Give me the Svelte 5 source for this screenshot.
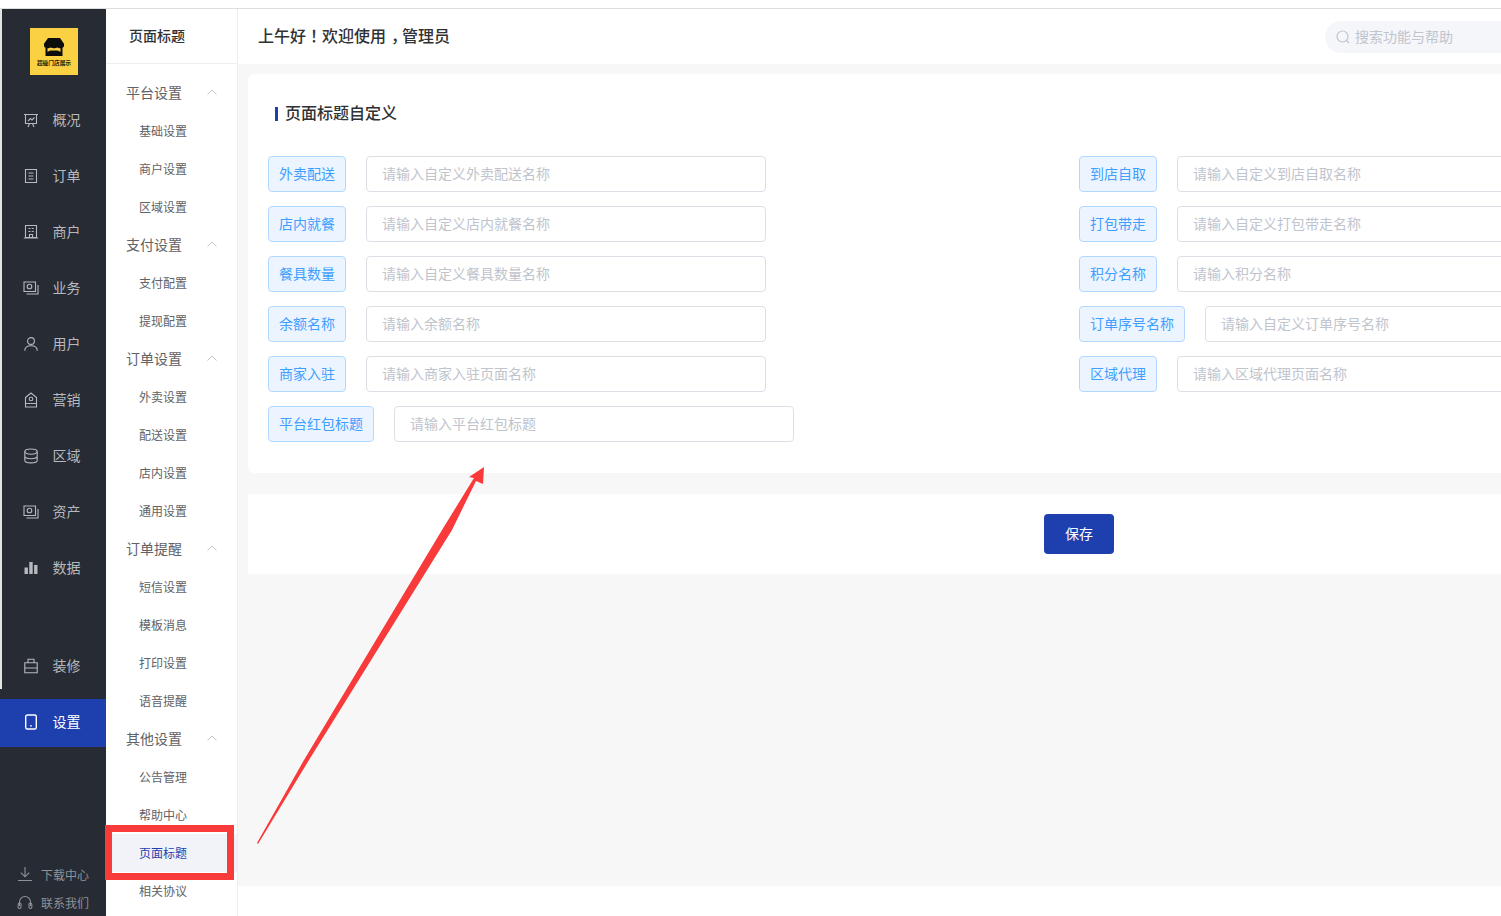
<script>
  const railTop = ['概况','订单','商户','业务','用户','营销','区域','资产','数据'];
  const groups = [
    ['平台设置', ['基础设置','商户设置','区域设置']],
    ['支付设置', ['支付配置','提现配置']],
    ['订单设置', ['外卖设置','配送设置','店内设置','通用设置']],
    ['订单提醒', ['短信设置','模板消息','打印设置','语音提醒']],
    ['其他设置', ['公告管理','帮助中心','页面标题','相关协议']]
  ];
  const left = [
    ['外卖配送','请输入自定义外卖配送名称'],
    ['店内就餐','请输入自定义店内就餐名称'],
    ['餐具数量','请输入自定义餐具数量名称'],
    ['余额名称','请输入余额名称'],
    ['商家入驻','请输入商家入驻页面名称'],
    ['平台红包标题','请输入平台红包标题']
  ];
  const right = [
    ['到店自取','请输入自定义到店自取名称'],
    ['打包带走','请输入自定义打包带走名称'],
    ['积分名称','请输入积分名称'],
    ['订单序号名称','请输入自定义订单序号名称'],
    ['区域代理','请输入区域代理页面名称']
  ];
</script>

{#snippet icon(name)}
  <svg class="ico" viewBox="0 0 16 16" fill="none" stroke="currentColor" stroke-width="1.1">
    {#if name === '概况'}
      <path d="M1 2.5h14M2.5 2.500v9h11v-9M5 15l1.500-3.500M11 15l-1.500-3.500M5 9l2.500-2.500 1.500 1.500 2.500-2.500"/>
    {:else if name === '订单'}
      <path d="M2.500 1.500h11v13h-11zM5.500 5h5M5.500 8h5M5.500 11h5"/>
    {:else if name === '商户'}
      <path d="M2.500 1.500h11v12h-11zM.8 14h14.400M5.500 4.500h2M8.700 4.500h2M5.500 7.500h2M8.700 7.500h2M6.500 14v-3.500h3V14"/>
    {:else if name === '业务' || name === '资产'}
      <path d="M1 2h11.500v9.500H1zM3.500 14h11.500V5"/><circle cx="6.500" cy="6.500" r="2.300"/>
    {:else if name === '用户'}
      <circle cx="8" cy="5" r="3.400"/><path d="M1.800 14.800c0-3.400 2.600-5 6.200-5s6.200 1.600 6.200 5"/>
    {:else if name === '营销'}
      <path d="M2.500 5.500 8 1l5.500 4.500V15h-11zM2.500 11.500h11"/><circle cx="8" cy="7" r="1.800"/>
    {:else if name === '区域'}
      <ellipse cx="8" cy="3.600" rx="6.200" ry="2.600"/><path d="M1.800 3.600v8.600c0 1.500 2.800 2.700 6.200 2.700s6.200-1.200 6.200-2.700V3.600M1.800 8c0 1.500 2.800 2.700 6.200 2.700s6.200-1.200 6.200-2.700"/>
    {:else if name === '数据'}
      <path fill="currentColor" stroke="none" d="M1.500 7.500h3.400V14H1.500zM6.300 2h3.400v12H6.300zM11.100 5h3.400v9h-3.400z"/>
    {:else if name === '装修'}
      <path d="M1.800 4.800h12.400V14.800H1.800zM5 4.800V1.200h6v3.600M1.800 10h12.400"/>
    {:else if name === '设置'}
      <rect x="2.700" y="1" width="10.600" height="14" rx="1.600" stroke-width="1.400"/><circle cx="8" cy="11.800" r=".9" fill="currentColor" stroke="none"/>
    {:else if name === 'download'}
      <path d="M8 1v9.500M3.800 6.600 8 10.800l4.200-4.200M1 14.500h14"/>
    {:else if name === 'contact'}
      <path d="M2.500 12V8a5.500 5.500 0 0 1 11 0v4"/><rect x="1.200" y="9" width="2.800" height="5.500" rx="1.200"/><rect x="12" y="9" width="2.800" height="5.500" rx="1.200"/>
    {/if}
  </svg>
{/snippet}

{#snippet field(row)}
  <div class="field">
    <span class="tag">{row[0]}</span>
    <input class="inp" placeholder={row[1]} />
  </div>
{/snippet}

<div class="page">
  <div class="shell">
    <aside class="rail">
      <div class="logo">
        <svg class="logo-mark" viewBox="0 0 20 20" preserveAspectRatio="none">
          <path fill="#0d0d0d" d="M4 0h12l4 6.500v2.500a2 2 0 0 1-1.500 1.900V20H1.500V10.900A2 2 0 0 1 0 9V6.500z"/>
          <path fill="#fbd144" d="M3.500 11.500c1.500 0 2.400-1 3.200-1 .8 0 2 .9 3.300.9s2.500-.9 3.300-.9c.8 0 1.700 1 3.200 1v3.800c-1.200-.3-2-1.300-3-1.300H6.500c-1 0-1.800 1-3 1.300z"/>
        </svg>
        <span class="logo-text">超级门店展示</span>
      </div>
      <nav class="rail-main">
        {#each railTop as name}
          <div class="rail-item">{@render icon(name)}<span>{name}</span></div>
        {/each}
      </nav>
      <nav class="rail-second">
        <div class="rail-item">{@render icon('装修')}<span>装修</span></div>
        <div class="rail-item active">{@render icon('设置')}<span>设置</span></div>
      </nav>
      <div class="rail-foot">
        <div class="foot-row">{@render icon('download')}<span>下载中心</span></div>
        <div class="foot-row">{@render icon('contact')}<span>联系我们</span></div>
      </div>
    </aside>

    <aside class="subnav">
      <div class="sub-head">页面标题</div>
      <div class="sub-list">
        {#each groups as g}
          <div class="sub-group">
            <span>{g[0]}</span>
            <svg class="chev" viewBox="0 0 10 6" fill="none" stroke="currentColor"><path d="M.5 5.500 5 1l4.500 4.500"/></svg>
          </div>
          {#each g[1] as item}
            <div class="sub-item" class:current={item === '页面标题'}>{item}</div>
          {/each}
        {/each}
      </div>
    </aside>

    <main class="main">
      <header class="top">
        <div class="greet">上午好<span class="punct">！</span>欢迎使用<span class="comma">，</span>管理员</div>
        <div class="search">
          <svg class="search-ico" viewBox="0 0 14 14" fill="none" stroke="currentColor" stroke-width="1.2"><circle cx="6.500" cy="6.500" r="5.500"/><path d="m10.500 10.500 2.500 2.500"/></svg>
          <span>搜索功能与帮助</span>
        </div>
      </header>
      <div class="content">
        <section class="card form-card">
          <h2 class="title">页面标题自定义</h2>
          <div class="cols">
            <div class="col">{#each left as row}{@render field(row)}{/each}</div>
            <div class="col">{#each right as row}{@render field(row)}{/each}</div>
          </div>
        </section>
        <section class="card save-card">
          <button class="save">保存</button>
        </section>
      </div>
    </main>
  </div>

  <!-- Annotations drawn over the screenshot -->
  <div class="red-box"></div>
  <svg class="arrow" viewBox="0 0 1501 916">
    <polygon fill="#f93a3a" points="484,467 483,484 476,481 452,530 309,760 258,844 257,843 304,760 442,530 474,478 469,477"/>
  </svg>
</div>

<style>
  :global(body) { margin: 0; background: #fff; }
  .page {
    position: relative;
    width: 1501px;
    height: 916px;
    overflow: hidden;
    background: #fff;
    font-family: "Noto Sans CJK SC", "Noto Sans", sans-serif;
    font-size: 14px;
  }
  .shell {
    display: flex;
    height: 907px;
    margin-top: 8px;
    border-top: 1px solid #dedede;
  }

  .rail {
    position: relative;
    flex: 0 0 106px;
    display: flex;
    flex-direction: column;
    height: 907px;
    background: #272b33;
    color: #b6b9bd;
  }
  .rail::before {
    content: "";
    position: absolute;
    left: 0;
    top: 0;
    width: 2px;
    height: 680px;
    background: #e4e4e4;
  }
  .logo {
    position: relative;
    display: flex;
    flex-direction: column;
    align-items: center;
    width: 48px;
    height: 47px;
    margin: 19px 0 21px 30px;
    padding-top: 10px;
    box-sizing: border-box;
    background: #fbd144;
  }
  .logo-mark { width: 20px; height: 18px; display: block; }
  .logo-text {
    margin-top: 3px;
    font-size: 5.700px;
    line-height: 7px;
    color: #201a05;
    white-space: nowrap;
    font-weight: 700;
  }
  .rail-main { display: flex; flex-direction: column; gap: 8px; }
  .rail-second { display: flex; flex-direction: column; gap: 9px; margin-top: 50px; }
  .rail-item {
    display: flex;
    align-items: center;
    gap: 13.500px;
    height: 48px;
    padding-left: 23px;
    box-sizing: border-box;
  }
  .rail-item span { padding-bottom: 2px; }
  .rail-item.active { padding-bottom: 2px; background: #1e3fae; color: #fff; }
  .ico { width: 16px; height: 16px; flex: none; }
  .rail-foot { margin-top: auto; font-size: 12px; color: #8f9297; }
  .foot-row {
    display: flex;
    align-items: center;
    gap: 8px;
    height: 28px;
    padding-left: 17px;
  }

  .subnav {
    flex: 0 0 131px;
    background: #fff;
    border-right: 1px solid #eeeeee;
    color: #606266;
  }
  .sub-head {
    height: 52px;
    line-height: 52px;
    padding: 0 0 2px 23px;
    border-bottom: 1px solid #eeeeee;
    color: #303133;
    font-weight: 500;
    font-size: 14px;
  }
  .sub-list { padding-top: 10px; }
  .sub-group {
    display: flex;
    align-items: center;
    justify-content: space-between;
    height: 38px;
    padding: 0 20px;
    font-size: 14px;
  }
  .sub-group span { padding-bottom: 2px; }
  .chev { width: 10px; height: 6px; color: #c0c4cc; margin-bottom: 3px; }
  .sub-item {
    height: 38px;
    line-height: 38px;
    padding-left: 33px;
    font-size: 12px;
  }
  .sub-item.current { background: #f2f3f8; color: #1e3fae; }

  .main {
    flex: 1;
    min-width: 0;
    display: flex;
    flex-direction: column;
    height: 877px;
  }
  .top {
    flex: 0 0 55px;
    display: flex;
    align-items: center;
    justify-content: space-between;
    padding-left: 20px;
    background: #fff;
  }
  .greet {
    padding-bottom: 4px;
    font-size: 16px;
    font-weight: 500;
    color: #303133;
  }
  .punct { font-family: "Noto Sans CJK KR", "Noto Sans CJK SC", sans-serif; }
  .comma { display: inline-block; width: 11px; padding-left: 5px; }
  .search {
    display: flex;
    align-items: center;
    gap: 5px;
    width: 176px;
    height: 32px;
    padding-left: 11px;
    box-sizing: border-box;
    border-radius: 16px 0 0 16px;
    background: #f5f6fa;
    color: #c0c4cc;
  }
  .search span { padding-bottom: 2px; }
  .search-ico { width: 14px; height: 14px; }
  .content {
    flex: 1;
    display: flex;
    flex-direction: column;
    gap: 21px;
    padding: 10px 0 0 10px;
    background: #f7f7f7;
  }
  .card { background: #fff; }
  .form-card {
    height: 399px;
    box-sizing: border-box;
    padding: 0 0 0 20px;
    border-radius: 6px 0 0 6px;
  }
  .title {
    position: relative;
    height: 14px;
    margin: 0 0 35px 7px;
    padding: 33px 0 0 10px;
    font-size: 16px;
    font-weight: 500;
    line-height: 10px;
    color: #303133;
  }
  .title::before {
    content: "";
    position: absolute;
    left: 0;
    top: 33px;
    width: 3px;
    height: 14px;
    background: #1e3fae;
  }
  .cols { display: grid; grid-template-columns: 811px 811px; }
  .col { display: flex; flex-direction: column; gap: 14px; }
  .field { display: flex; gap: 20px; height: 36px; }
  .tag {
    flex: none;
    height: 36px;
    line-height: 32px;
    padding: 0 10px;
    box-sizing: border-box;
    border: 1px solid #b3d8ff;
    border-radius: 4px;
    background: #ecf5ff;
    color: #409eff;
  }
  .inp {
    flex: none;
    width: 400px;
    height: 36px;
    padding: 0 15px 2px;
    box-sizing: border-box;
    border: 1px solid #dcdfe6;
    border-radius: 4px;
    outline: none;
    background: #fff;
    font: inherit;
  }
  .inp::placeholder { color: #c0c4cc; opacity: 1; }
  .save-card {
    height: 80px;
    padding-left: 796px;
    display: flex;
    align-items: center;
  }
  .save {
    width: 70px;
    height: 40px;
    padding: 0 0 2px;
    border: none;
    border-radius: 4px;
    background: #1e3fae;
    color: #fff;
    font: inherit;
  }

  .red-box {
    position: absolute;
    left: 105px;
    top: 825px;
    width: 129px;
    height: 55px;
    box-sizing: border-box;
    border: 7px solid #f93a3a;
  }
  .arrow {
    position: absolute;
    left: 0;
    top: 0;
    width: 1501px;
    height: 916px;
    pointer-events: none;
  }
</style>
